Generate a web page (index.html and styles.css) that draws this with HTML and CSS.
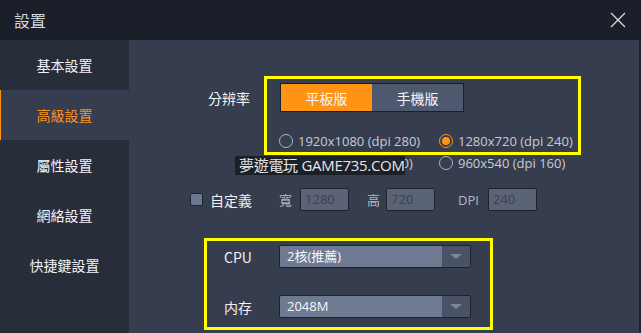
FILE: index.html
```html
<!DOCTYPE html>
<html lang="zh-Hant">
<head>
    <meta charset="UTF-8">
    <title>設置</title>
    <link rel="stylesheet" href="styles.css">
</head>
<body>

    <!-- Title bar -->
    <div class="titlebar">
        <span class="title">設置</span>
        <svg class="close" width="16" height="16" viewBox="0 0 16 16">
            <path d="M1 1 L15 15 M15 1 L1 15" stroke="#d8dbe0" stroke-width="1.3" fill="none"/>
        </svg>
    </div>

    <div class="window">
        <!-- Left menu -->
        <ul class="menu">
            <li>基本設置</li>
            <li class="active">高級設置</li>
            <li>屬性設置</li>
            <li>網絡設置</li>
            <li>快捷鍵設置</li>
        </ul>

        <!-- Settings panel -->
        <div class="panel">
            <div class="row res-row">
                <span class="label res-label">分辨率</span>
                <div class="segment">
                    <span class="seg on">平板版</span>
                    <span class="seg">手機版</span>
                </div>
            </div>

            <div class="radios">
                <label class="radio"><i></i>1920x1080 (dpi 280)</label>
                <label class="radio checked"><i></i>1280x720 (dpi 240)</label>
                <label class="radio"><i></i>1600x900 (dpi 240)</label>
                <label class="radio"><i></i>960x540 (dpi 160)</label>
            </div>

            <div class="row custom-row">
                <span class="check"></span>
                <span class="label">自定義</span>
                <span class="small-label w-label">寬</span>
                <span class="field">1280</span>
                <span class="small-label h-label">高</span>
                <span class="field">720</span>
                <span class="small-label dpi-label">DPI</span>
                <span class="field">240</span>
            </div>

            <div class="row select-row cpu-row">
                <span class="label sel-label">CPU</span>
                <div class="select"><span>2核(推薦)</span><b></b></div>
            </div>

            <div class="row select-row mem-row">
                <span class="label sel-label">内存</span>
                <div class="select"><span>2048M</span><b></b></div>
            </div>

            <!-- annotations over the screenshot -->
            <div class="mark mark-res"></div>
            <div class="mark mark-sys"></div>
            <div class="watermark">夢遊電玩 GAME735.COM</div>
        </div>

        <div class="edge"></div>
    </div>

</body>
</html>
```

FILE: styles.css
```css
body {
    margin: 0;
    width: 641px;
    height: 333px;
    overflow: hidden;
    background-color: #363d4f;
    font-family: 'Open Sans', 'Noto Sans CJK TC', sans-serif;
    color: #eef0f3;
}

/* Top bar */
.titlebar {
    height: 40px;
    display: flex;
    align-items: center;
    justify-content: space-between;
    padding: 0 15px 0 14px;
    background-color: #1a1f29;
}

.title {
    font-family: 'Noto Sans CJK TC', sans-serif;
    font-size: 16px;
    color: #d3d7dd;
}

.close {
    display: block;
}

.window {
    display: flex;
    height: 293px;
}

/* Left menu */
.menu {
    list-style: none;
    margin: 0;
    padding: 0;
    width: 129px;
    background-color: #282d3a;
}

.menu li {
    height: 50px;
    display: flex;
    align-items: center;
    justify-content: center;
    font-family: 'Noto Sans CJK TC', sans-serif;
    font-size: 14px;
    color: #f2f4f7;
}

.menu li.active {
    background-color: #363d4f;
    color: #f7941d;
    border-left: 1px solid #ff9313;
    padding-right: 1px;
}

/* Main panel */
.panel {
    position: relative;
    flex: 1;
    padding-top: 43px;
}

.edge {
    width: 2px;
    background-color: #1b2233;
}

.row {
    display: flex;
    align-items: center;
}

.label {
    font-family: 'Noto Sans CJK TC', sans-serif;
    font-size: 14px;
    color: #f0f2f5;
}

.res-row {
    padding-left: 79px;
}

.res-label {
    width: 72px;
}

.segment {
    display: flex;
    border: 1px solid #1b1f28;
    height: 27px;
}

.seg {
    width: 91px;
    display: flex;
    align-items: center;
    justify-content: center;
    background-color: #4e596f;
    font-family: 'Noto Sans CJK TC', sans-serif;
    font-size: 14px;
    color: #f4f5f7;
}

.seg.on {
    background-color: #ff9313;
}

/* Resolution choices */
.radios {
    display: grid;
    grid-template-columns: 160px 160px;
    grid-auto-rows: 22px;
    margin-top: 18px;
    padding-left: 150px;
}

.radio {
    display: flex;
    align-items: center;
    gap: 5px;
    font-size: 13px;
    color: #c8ccd4;
}

.radio i {
    width: 12px;
    height: 12px;
    border: 1px solid #aeb4be;
    border-radius: 50%;
    box-sizing: content-box;
    position: relative;
}

.radio.checked i {
    border-color: #ff9313;
}

.radio.checked i::after {
    content: '';
    position: absolute;
    left: 2px;
    top: 2px;
    width: 8px;
    height: 8px;
    border-radius: 50%;
    background-color: #ff9313;
}

/* Custom size row */
.custom-row {
    margin-top: 14px;
    padding-left: 61px;
    height: 23px;
}

.check {
    width: 11px;
    height: 11px;
    background-color: #6d7890;
    border: 1px solid #1f232c;
    border-radius: 2px;
    margin-right: 7px;
}

.small-label {
    font-family: 'Open Sans', 'Noto Sans CJK TC', sans-serif;
    font-size: 13px;
    color: #b3b9c3;
}

.w-label {
    margin-left: 27px;
    margin-right: 8px;
}

.h-label {
    margin-left: 18px;
    margin-right: 6px;
}

.dpi-label {
    margin-left: 23px;
    margin-right: 9px;
}

.field {
    width: 43px;
    height: 21px;
    line-height: 21px;
    padding-left: 4px;
    background-color: #5b6376;
    border: 1px solid #1e222b;
    border-radius: 2px;
    font-size: 13px;
    color: #3c424e;
}

/* CPU / memory selects */
.select-row {
    padding-left: 95px;
    height: 23px;
}

.cpu-row {
    margin-top: 34px;
}

.mem-row {
    margin-top: 27px;
}

.sel-label {
    width: 55px;
}

.select {
    display: flex;
    width: 190px;
    height: 21px;
    border: 1px solid #1e222b;
    border-radius: 2px;
    background-color: #6e7a92;
}

.select span {
    flex: 1;
    padding-left: 7px;
    line-height: 21px;
    font-size: 13px;
    color: #f6f7f9;
}

.select b {
    width: 28px;
    background-color: #4a5266;
    display: flex;
    align-items: center;
    justify-content: center;
}

.select b::after {
    content: '';
    border-left: 6px solid transparent;
    border-right: 6px solid transparent;
    border-top: 5px solid #7c869a;
}

/* Yellow highlight boxes */
.mark {
    position: absolute;
    border: 3px solid #ffff00;
}

.mark-res {
    left: 135px;
    top: 36px;
    width: 311px;
    height: 73px;
}

.mark-sys {
    left: 75px;
    top: 198px;
    width: 283px;
    height: 86px;
}

.watermark {
    position: absolute;
    left: 106px;
    top: 116px;
    width: 166px;
    height: 19px;
    line-height: 19px;
    padding-left: 4px;
    background-color: rgba(24, 28, 37, 0.92);
    font-family: 'Open Sans', 'Noto Sans CJK TC', sans-serif;
    font-size: 15px;
    letter-spacing: -0.3px;
    color: #e4e6ea;
    white-space: nowrap;
}
```
